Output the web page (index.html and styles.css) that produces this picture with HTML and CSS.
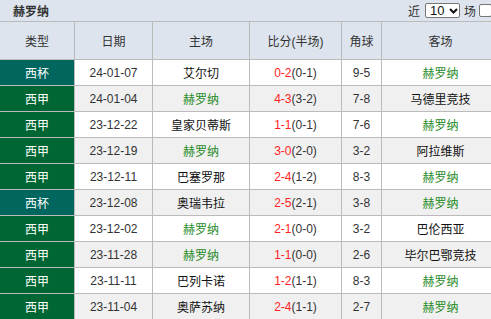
FILE: index.html
```html
<!DOCTYPE html>
<html lang="zh">
<head>
<meta charset="utf-8">
<link rel="stylesheet" href="styles.css">
</head>
<body>
<div class="page">
  <div class="titlebar">
    <span class="title">赫罗纳</span>
    <div class="filter">
      <span>近</span>
      <span class="sel"><span class="sel-val">10</span><svg class="chev" width="9" height="6" viewBox="0 0 9 6"><path d="M1 1 L4.5 4.5 L8 1" fill="none" stroke="#111" stroke-width="2"/></svg></span>
      <span>场</span>
      <span class="chk"></span>
    </div>
  </div>
  <div class="table">
    <div class="row head">
      <div class="c">类型</div><div class="c">日期</div><div class="c">主场</div><div class="c">比分(半场)</div><div class="c">角球</div><div class="c">客场</div>
    </div>
    <div class="row">
      <div class="c type cup">西杯</div><div class="c">24-01-07</div><div class="c team">艾尔切</div><div class="c"><span class="ft">0-2</span>(0-1)</div><div class="c">9-5</div><div class="c team g">赫罗纳</div>
    </div>
    <div class="row alt">
      <div class="c type lg">西甲</div><div class="c">24-01-04</div><div class="c team g">赫罗纳</div><div class="c"><span class="ft">4-3</span>(3-2)</div><div class="c">7-8</div><div class="c team">马德里竞技</div>
    </div>
    <div class="row">
      <div class="c type lg">西甲</div><div class="c">23-12-22</div><div class="c team">皇家贝蒂斯</div><div class="c"><span class="ft">1-1</span>(0-1)</div><div class="c">7-6</div><div class="c team g">赫罗纳</div>
    </div>
    <div class="row alt">
      <div class="c type lg">西甲</div><div class="c">23-12-19</div><div class="c team g">赫罗纳</div><div class="c"><span class="ft">3-0</span>(2-0)</div><div class="c">3-2</div><div class="c team">阿拉维斯</div>
    </div>
    <div class="row">
      <div class="c type lg">西甲</div><div class="c">23-12-11</div><div class="c team">巴塞罗那</div><div class="c"><span class="ft">2-4</span>(1-2)</div><div class="c">8-3</div><div class="c team g">赫罗纳</div>
    </div>
    <div class="row alt">
      <div class="c type cup">西杯</div><div class="c">23-12-08</div><div class="c team">奥瑞韦拉</div><div class="c"><span class="ft">2-5</span>(2-1)</div><div class="c">3-8</div><div class="c team g">赫罗纳</div>
    </div>
    <div class="row">
      <div class="c type lg">西甲</div><div class="c">23-12-02</div><div class="c team g">赫罗纳</div><div class="c"><span class="ft">2-1</span>(0-0)</div><div class="c">3-2</div><div class="c team">巴伦西亚</div>
    </div>
    <div class="row alt">
      <div class="c type lg">西甲</div><div class="c">23-11-28</div><div class="c team g">赫罗纳</div><div class="c"><span class="ft">1-1</span>(0-0)</div><div class="c">2-6</div><div class="c team">毕尔巴鄂竞技</div>
    </div>
    <div class="row">
      <div class="c type lg">西甲</div><div class="c">23-11-11</div><div class="c team">巴列卡诺</div><div class="c"><span class="ft">1-2</span>(1-1)</div><div class="c">8-3</div><div class="c team g">赫罗纳</div>
    </div>
    <div class="row alt">
      <div class="c type lg">西甲</div><div class="c">23-11-04</div><div class="c team">奥萨苏纳</div><div class="c"><span class="ft">2-4</span>(1-1)</div><div class="c">2-7</div><div class="c team g">赫罗纳</div>
    </div>
  </div>
</div>
</body>
</html>
```
FILE: styles.css
```css
html, body {
  margin: 0;
  padding: 0;
  overflow: hidden;
  background: #fff;
}
.page {
  width: 499px;
  font-family: "Liberation Sans", "Noto Sans CJK SC", sans-serif;
  font-size: 12px;
  color: #333;
}
.titlebar {
  height: 21px;
  background: #dde4ee;
  display: flex;
  align-items: center;
  padding: 0 7px 0 13px;
}
.title {
  font-weight: bold;
  color: #333;
  font-size: 12px;
}
.filter {
  margin-left: auto;
  display: flex;
  align-items: center;
  color: #333;
}
.sel {
  display: flex;
  align-items: center;
  box-sizing: border-box;
  width: 35px;
  height: 15px;
  margin: 0 4px 0 5px;
  padding-left: 4px;
  border: 1px solid #767676;
  border-radius: 2px;
  background: #fff;
  color: #111;
  font-size: 13px;
}
.sel-val {
  line-height: 13px;
}
.chev {
  margin-left: 5px;
}
.chk {
  box-sizing: border-box;
  width: 13px;
  height: 13px;
  margin-left: 3px;
  border: 1px solid #767676;
  border-radius: 2px;
  background: #fff;
}
.table {
  display: flex;
  flex-direction: column;
  gap: 1px;
  background: #bbbbbb;
  border-top: 1px solid #bbbbbb;
  border-bottom: 1px solid #bbbbbb;
}
.row {
  display: grid;
  grid-template-columns: 74px 77px 96px 91px 39px 117px;
  column-gap: 1px;
  height: 25px;
}
.row.head {
  height: 37px;
}
.c {
  display: flex;
  align-items: center;
  justify-content: center;
  background: #fff;
  white-space: nowrap;
}
.head .c {
  background: #dde4ee;
  color: #333;
}
.alt .c {
  background: #f0f0f0;
}
.row .type {
  color: #fff;
}
.row .cup {
  background: #00665e;
}
.row .lg {
  background: #006633;
}
.team {
  color: #111;
}
.team.g {
  color: #1f8a1f;
}
.ft {
  color: #f22;
}
```
